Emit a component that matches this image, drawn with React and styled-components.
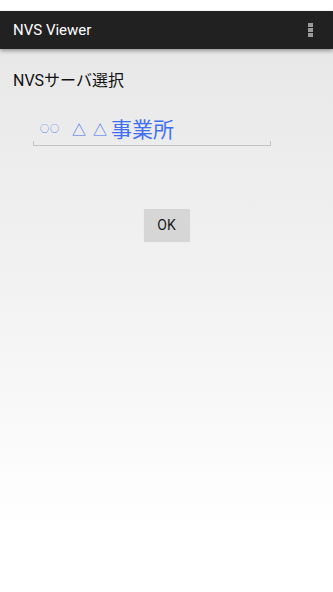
import React from "react";
import styled, { createGlobalStyle } from "styled-components";

const Global = createGlobalStyle`
  html, body { margin: 0; padding: 0; background: #fff; }
  body { font-family: Roboto, "Noto Sans CJK JP", sans-serif; }
`;

const Screen = styled.div`
  width: 333px;
  min-height: 592px;
  display: flex;
  flex-direction: column;
  background: #fff;
`;

const StatusStrip = styled.div`
  height: 11px;
  background: #fff;
`;

const ActionBar = styled.header`
  height: 38px;
  background: #212121;
  display: flex;
  align-items: center;
  justify-content: space-between;
  padding: 0 20px 0 13px;
  position: relative;
  z-index: 1;
  box-shadow: 0 2px 4px rgba(0, 0, 0, 0.35);
`;

const Title = styled.h1`
  margin: 0;
  color: #fff;
  font-size: 15px;
  font-weight: 400;
  font-family: Roboto, sans-serif;
`;

const Overflow = styled.div`
  display: flex;
  flex-direction: column;
  gap: 1px;
`;

const Dot = styled.span`
  width: 5px;
  height: 4px;
  background: #9a9a9a;
`;

const Content = styled.main`
  flex: 1;
  padding: 22px 13px 0;
  background: linear-gradient(#e8e8e8 0px, #f3f3f3 260px, #ffffff 480px);
  display: flex;
  flex-direction: column;
`;

const Label = styled.div`
  font-size: 16px;
  color: #111;
  line-height: 20px;
  font-family: Roboto, "Noto Sans CJK JP", sans-serif;
`;

const Field = styled.div`
  margin: 25px 0 0 20px;
  width: 238px;
  height: 30px;
  position: relative;
  border-bottom: 1px solid #c4c4c4;
  display: flex;
  align-items: center;
  padding: 0 0 4px 7px;
  box-sizing: border-box;
  color: #3f6ff2;
  font-family: "Noto Sans CJK JP", sans-serif;

  &::before,
  &::after {
    content: "";
    position: absolute;
    bottom: 0;
    width: 1px;
    height: 4px;
    background: #c4c4c4;
  }
  &::before { left: 0; }
  &::after { right: 0; }
`;

const Sym = styled.span`
  display: block;
  line-height: 1;
  font-size: ${(p) => p.$size}px;
  margin-right: ${(p) => p.$gap || 0}px;
  white-space: pre;
`;

const ButtonRow = styled.div`
  display: flex;
  justify-content: center;
  margin-top: 63px;
  margin-left: -13px;
  margin-right: -13px;
`;

const Button = styled.button`
  width: 46px;
  height: 32px;
  border: none;
  border-radius: 1px;
  background: #d6d6d6;
  color: #1a1a1a;
  font-size: 14px;
  font-family: Roboto, sans-serif;
  padding: 0;
  box-shadow: 0 1px 1px rgba(0, 0, 0, 0.12);
`;

export default function App() {
  return (
    <>
      <Global />
      <Screen>
        <StatusStrip />
        <ActionBar>
          <Title>NVS Viewer</Title>
          <Overflow>
            <Dot />
            <Dot />
            <Dot />
          </Overflow>
        </ActionBar>
        <Content>
          <Label>NVSサーバ選択</Label>
          <Field>
            <Sym $size={9} $gap={1}>○</Sym>
            <Sym $size={9} $gap={13}>○</Sym>
            <Sym $size={14} $gap={7}>△</Sym>
            <Sym $size={14} $gap={4}>△</Sym>
            <Sym $size={21}>事業所</Sym>
          </Field>
          <ButtonRow>
            <Button>OK</Button>
          </ButtonRow>
        </Content>
      </Screen>
    </>
  );
}
